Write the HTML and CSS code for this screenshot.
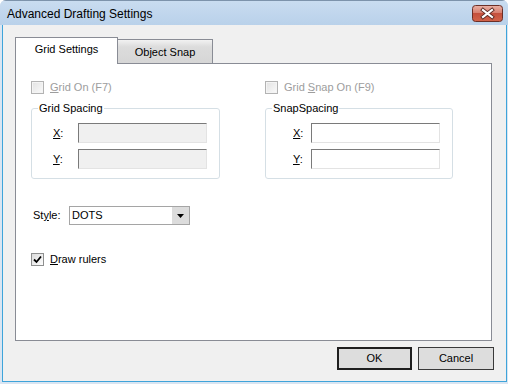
FILE: index.html
```html
<!DOCTYPE html>
<html lang="en">
<head>
  <meta charset="UTF-8">
  <title>Advanced Drafting Settings</title>
  <link rel="stylesheet" href="styles.css">
</head>
<body>
  <div class="window">
    <div class="titlebar">
      <span class="title">Advanced Drafting Settings</span>
      <span class="close">
        <svg width="31" height="17" viewBox="0 0 31 17">
          <defs>
            <linearGradient id="red" x1="0" y1="0" x2="0" y2="1">
              <stop offset="0" stop-color="#eab2a6"/>
              <stop offset="0.45" stop-color="#d88070"/>
              <stop offset="0.5" stop-color="#c4503d"/>
              <stop offset="1" stop-color="#d3644a"/>
            </linearGradient>
          </defs>
          <rect x="0.5" y="0.5" width="30" height="16" rx="3" fill="url(#red)" stroke="#6b2f27"/>
          <path d="M11 5 L20 12 M20 5 L11 12" stroke="#5a2a24" stroke-width="4" stroke-linecap="square"/>
          <path d="M11 5 L20 12 M20 5 L11 12" stroke="#fff" stroke-width="2.2" stroke-linecap="square"/>
        </svg>
      </span>
    </div>

    <div class="client">
      <div class="tabs">
        <div class="tab active">Grid Settings</div>
        <div class="tab">Object Snap</div>
      </div>

      <div class="panel">
        <div class="cols">
          <div class="check disabled"><span class="box"></span><span><u>G</u>rid On (F7)</span></div>
          <div class="check disabled"><span class="box"></span><span>Grid <u>S</u>nap On (F9)</span></div>

          <fieldset class="group">
            <legend>Grid Spacing</legend>
            <div class="fields grid-fields">
              <div class="field"><span class="lbl"><u>X</u>:</span><span class="input disabled"></span></div>
              <div class="field"><span class="lbl"><u>Y</u>:</span><span class="input disabled"></span></div>
            </div>
          </fieldset>

          <fieldset class="group">
            <legend>SnapSpacing</legend>
            <div class="fields snap-fields">
              <div class="field"><span class="lbl"><u>X</u>:</span><span class="input"></span></div>
              <div class="field"><span class="lbl"><u>Y</u>:</span><span class="input"></span></div>
            </div>
          </fieldset>
        </div>

        <div class="style-row">
          <span class="style-label">St<u>y</u>le:</span>
          <div class="combo">
            <span class="combo-value">DOTS</span>
            <span class="combo-arrow">
              <svg width="7" height="4" viewBox="0 0 7 4"><polygon points="0,0 7,0 3.5,4" fill="#000"/></svg>
            </span>
          </div>
        </div>

        <div class="check rulers">
          <span class="box checked">
            <svg width="11" height="11" viewBox="0 0 11 11"><path d="M2 5.5 L4.5 8 L9 2.5" fill="none" stroke="#000" stroke-width="1.8"/></svg>
          </span>
          <span><u>D</u>raw rulers</span>
        </div>
      </div>

      <div class="buttons">
        <div class="btn default">OK</div>
        <div class="btn cancel">Cancel</div>
      </div>
    </div>
  </div>
</body>
</html>
```

FILE: styles.css
```css
body {
  margin: 0;
  font-family: "Liberation Sans", Arial, sans-serif;
  font-size: 11px;
  color: #000;
  background: #fff;
}
.window {
  width: 508px;
  height: 384px;
  box-sizing: border-box;
  display: flex;
  flex-direction: column;
  background: #d9e5f2;
  border-radius: 6px 6px 0 0;
  overflow: hidden;
}
.titlebar {
  height: 25px;
  flex: none;
  box-sizing: border-box;
  display: flex;
  justify-content: space-between;
  align-items: flex-start;
  padding: 0 5px 0 7px;
  border-top: 1px solid #7d93ab;
  background: linear-gradient(#c9dcf0, #b9d1ea);
}
.title {
  margin-top: 5px;
  font-size: 12px;
  line-height: 16px;
}
.close {
  margin-top: 4px;
  height: 17px;
}
.close svg {
  display: block;
}
.client {
  flex: 1;
  margin: 0 1px 2px 2px;
  display: flex;
  flex-direction: column;
  background: #f0f0f0;
  border: 1px solid #3ea4da;
  border-top: none;
}
.tabs {
  display: flex;
  align-items: flex-end;
  margin: 12px 0 0 12px;
}
.tab {
  width: 95px;
  height: 24px;
  box-sizing: border-box;
  padding-top: 6px;
  line-height: 13px;
  text-align: center;
  border: 1px solid #898c95;
  border-left: none;
  border-bottom: none;
  background: linear-gradient(#f2f2f2, #dcdcdc 30%, #d6d6d6);
}
.tab.active {
  width: 103px;
  height: 27px;
  padding-top: 5px;
  border-left: 1px solid #898c95;
  background: #fff;
  margin-bottom: -1px;
  position: relative;
  z-index: 1;
}
.panel {
  height: 278px;
  box-sizing: border-box;
  margin: 0 14px 0 12px;
  padding: 17px 0 0 15px;
  border: 1px solid #898c95;
  background: #fff;
}
.cols {
  display: grid;
  grid-template-columns: 189px 188px;
  column-gap: 45px;
  row-gap: 8px;
}
.check {
  display: flex;
  align-items: center;
  line-height: 13px;
}
.check.disabled {
  color: #9d9d9d;
}
.box {
  width: 13px;
  height: 13px;
  box-sizing: border-box;
  margin-right: 6px;
  border: 1px solid #b3b3b3;
  background: linear-gradient(135deg, #e2e2e2, #fafafa);
  box-shadow: inset 0 0 0 1px #f4f4f4;
}
.box.checked {
  border-color: #8e8f8f;
  background: linear-gradient(135deg, #dcdcdc, #fdfdfd);
  box-shadow: none;
}
.box svg {
  display: block;
}
.group {
  margin: 0;
  padding: 8px 0 9px 0;
  min-width: 0;
  border: 1px solid #d5dfe5;
  border-radius: 3px;
}
.group legend {
  margin-left: 6px;
  padding: 0 1px;
  line-height: 13px;
}
.fields {
  display: flex;
  flex-direction: column;
  gap: 6px;
}
.grid-fields {
  padding-left: 21px;
}
.grid-fields .lbl {
  width: 25px;
}
.snap-fields {
  padding-left: 27px;
}
.snap-fields .lbl {
  width: 18px;
}
.field {
  display: flex;
  align-items: center;
  line-height: 13px;
}
.input {
  width: 129px;
  height: 20px;
  box-sizing: border-box;
  border: 1px solid;
  border-color: #7a7a7a #e3e3e3 #e3e3e3 #7a7a7a;
  background: #fff;
}
.input.disabled {
  background: #f0f0f0;
}
.style-row {
  display: flex;
  align-items: center;
  margin: 27px 0 0 2px;
  line-height: 13px;
}
.style-label {
  width: 36px;
}
.combo {
  width: 121px;
  height: 19px;
  box-sizing: border-box;
  display: flex;
  border: 1px solid #a5a5a5;
  background: #fff;
}
.combo-value {
  flex: 1;
  padding-left: 2px;
  line-height: 17px;
}
.combo-arrow {
  width: 17px;
  display: flex;
  align-items: center;
  justify-content: center;
  background: #dcdcdc;
}
.combo-arrow svg {
  display: block;
}
.rulers {
  margin-top: 28px;
}
.buttons {
  display: flex;
  justify-content: flex-end;
  gap: 6px;
  margin: 6px 12px 0 0;
}
.btn {
  width: 75px;
  height: 23px;
  box-sizing: border-box;
  display: flex;
  align-items: center;
  justify-content: center;
  line-height: 13px;
  border: 1px solid #3a3a3a;
  background: #dddddd;
}
.btn.default {
  border: 2px solid #1f1f1f;
}
.btn.cancel {
  width: 76px;
}
```
